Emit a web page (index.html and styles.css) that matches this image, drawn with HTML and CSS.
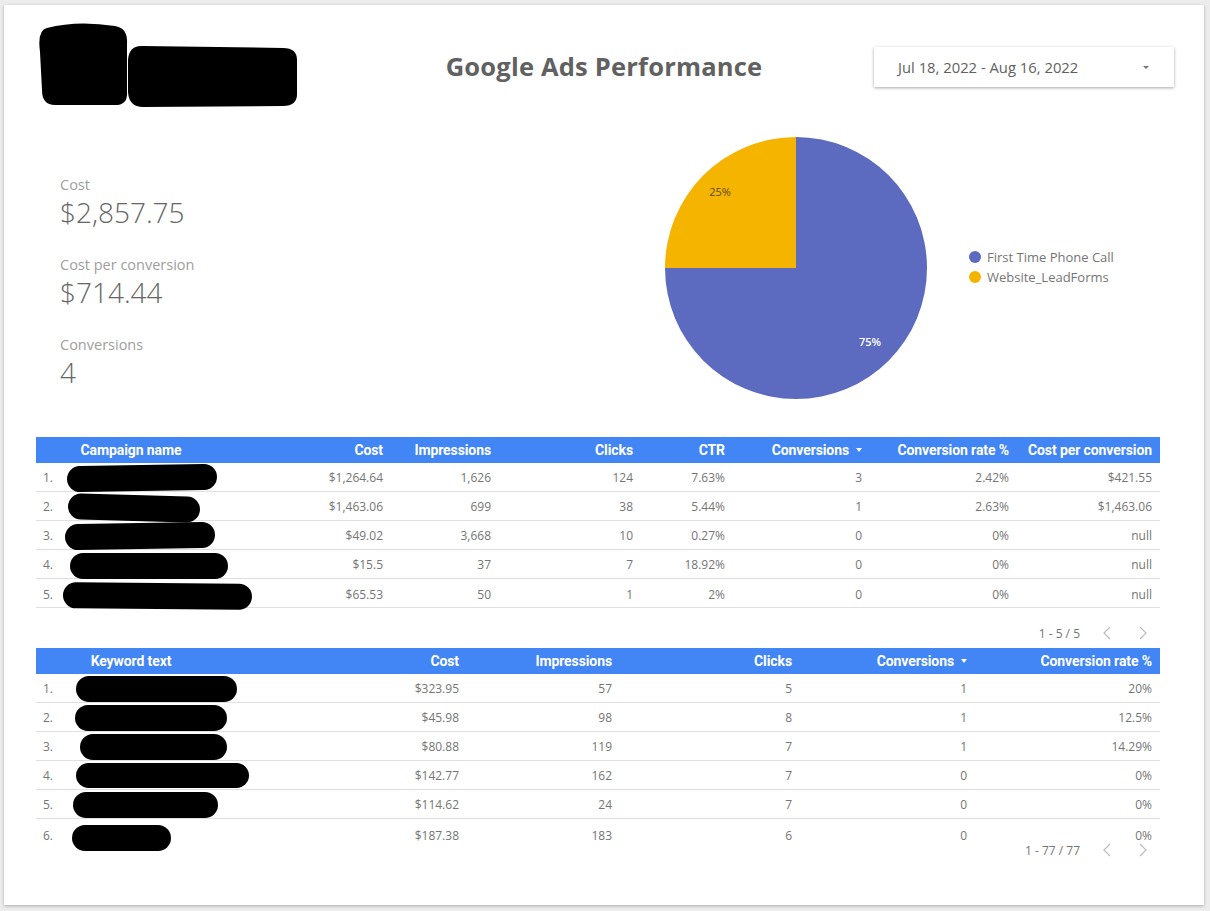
FILE: index.html
```html
<!DOCTYPE html>
<html>
<head>
<meta charset="utf-8">
<link rel="stylesheet" href="styles.css">
</head>
<body>
<div class="card">
  <header class="top">
    <div class="logo">
      <svg width="270" height="90" viewBox="0 0 270 90">
        <path d="M10 6 Q40 -2 78 4 Q91 6 90 22 L90 70 Q91 84 76 83 L18 83 Q5 83 5 68 L3 30 Q0 8 10 6 Z" fill="#000"/>
        <path d="M104 24 L246 26 Q261 26 260 40 L260 70 Q261 84 246 84 L106 85 Q92 85 91 70 L91 38 Q92 24 104 24 Z" fill="#000"/>
      </svg>
    </div>
    <h1 class="title">Google Ads Performance</h1>
    <div class="date-wrap">
      <div class="date">
        <span>Jul 18, 2022 - Aug 16, 2022</span>
        <span class="caret"></span>
      </div>
    </div>
  </header>

  <section class="overview">
    <div class="scores">
      <div class="score"><div class="s-label">Cost</div><div class="s-value">$2,857.75</div></div>
      <div class="score"><div class="s-label">Cost per conversion</div><div class="s-value">$714.44</div></div>
      <div class="score"><div class="s-label">Conversions</div><div class="s-value">4</div></div>
    </div>
    <div class="pie">
      <svg width="262" height="262" viewBox="0 0 262 262">
        <path d="M131 131 L131 0 A131 131 0 1 1 0 131 Z" fill="#5c6bc0"/>
        <path d="M131 131 L0 131 A131 131 0 0 1 131 0 Z" fill="#f4b400"/>
        <text x="55" y="59" class="pl-dark" text-anchor="middle">25%</text>
        <text x="205" y="209" class="pl-light" text-anchor="middle">75%</text>
      </svg>
    </div>
    <ul class="legend">
      <li><span class="dot blue"></span>First Time Phone Call</li>
      <li><span class="dot yellow"></span>Website_LeadForms</li>
    </ul>
  </section>

  <section class="table t1">
    <div class="row head">
      <div class="c idx"></div>
      <div class="c name">Campaign name</div>
      <div class="c">Cost</div>
      <div class="c">Impressions</div>
      <div class="c">Clicks</div>
      <div class="c">CTR</div>
      <div class="c">Conversions<span class="sort"></span></div>
      <div class="c">Conversion rate %</div>
      <div class="c">Cost per conversion</div>
    </div>
    <div class="row">
      <div class="c idx">1.</div><div class="c name"><span class="blob a1"></span></div>
      <div class="c">$1,264.64</div><div class="c">1,626</div><div class="c">124</div><div class="c">7.63%</div><div class="c">3</div><div class="c">2.42%</div><div class="c">$421.55</div>
    </div>
    <div class="row">
      <div class="c idx">2.</div><div class="c name"><span class="blob a2"></span></div>
      <div class="c">$1,463.06</div><div class="c">699</div><div class="c">38</div><div class="c">5.44%</div><div class="c">1</div><div class="c">2.63%</div><div class="c">$1,463.06</div>
    </div>
    <div class="row">
      <div class="c idx">3.</div><div class="c name"><span class="blob a3"></span></div>
      <div class="c">$49.02</div><div class="c">3,668</div><div class="c">10</div><div class="c">0.27%</div><div class="c">0</div><div class="c">0%</div><div class="c">null</div>
    </div>
    <div class="row">
      <div class="c idx">4.</div><div class="c name"><span class="blob a4"></span></div>
      <div class="c">$15.5</div><div class="c">37</div><div class="c">7</div><div class="c">18.92%</div><div class="c">0</div><div class="c">0%</div><div class="c">null</div>
    </div>
    <div class="row">
      <div class="c idx">5.</div><div class="c name"><span class="blob a5"></span></div>
      <div class="c">$65.53</div><div class="c">50</div><div class="c">1</div><div class="c">2%</div><div class="c">0</div><div class="c">0%</div><div class="c">null</div>
    </div>
    <div class="pager p1">
      <span>1 - 5 / 5</span>
      <svg class="chev" width="10" height="14" viewBox="0 0 10 14"><polyline points="8,1 2,7 8,13" fill="none" stroke="#bdbdbd" stroke-width="1.2"/></svg>
      <svg class="chev" width="10" height="14" viewBox="0 0 10 14"><polyline points="2,1 8,7 2,13" fill="none" stroke="#bdbdbd" stroke-width="1.2"/></svg>
    </div>
  </section>

  <section class="table t2">
    <div class="row head">
      <div class="c idx"></div>
      <div class="c name">Keyword text</div>
      <div class="c">Cost</div>
      <div class="c">Impressions</div>
      <div class="c">Clicks</div>
      <div class="c">Conversions<span class="sort"></span></div>
      <div class="c">Conversion rate %</div>
    </div>
    <div class="row">
      <div class="c idx">1.</div><div class="c name"><span class="blob b1"></span></div>
      <div class="c">$323.95</div><div class="c">57</div><div class="c">5</div><div class="c">1</div><div class="c">20%</div>
    </div>
    <div class="row">
      <div class="c idx">2.</div><div class="c name"><span class="blob b2"></span></div>
      <div class="c">$45.98</div><div class="c">98</div><div class="c">8</div><div class="c">1</div><div class="c">12.5%</div>
    </div>
    <div class="row">
      <div class="c idx">3.</div><div class="c name"><span class="blob b3"></span></div>
      <div class="c">$80.88</div><div class="c">119</div><div class="c">7</div><div class="c">1</div><div class="c">14.29%</div>
    </div>
    <div class="row">
      <div class="c idx">4.</div><div class="c name"><span class="blob b4"></span></div>
      <div class="c">$142.77</div><div class="c">162</div><div class="c">7</div><div class="c">0</div><div class="c">0%</div>
    </div>
    <div class="row">
      <div class="c idx">5.</div><div class="c name"><span class="blob b5"></span></div>
      <div class="c">$114.62</div><div class="c">24</div><div class="c">7</div><div class="c">0</div><div class="c">0%</div>
    </div>
    <div class="row last">
      <div class="c idx">6.</div><div class="c name"><span class="blob b6"></span></div>
      <div class="c">$187.38</div><div class="c">183</div><div class="c">6</div><div class="c">0</div><div class="c">0%</div>
    </div>
    <div class="pager p2">
      <span>1 - 77 / 77</span>
      <svg class="chev" width="10" height="14" viewBox="0 0 10 14"><polyline points="8,1 2,7 8,13" fill="none" stroke="#bdbdbd" stroke-width="1.2"/></svg>
      <svg class="chev" width="10" height="14" viewBox="0 0 10 14"><polyline points="2,1 8,7 2,13" fill="none" stroke="#bdbdbd" stroke-width="1.2"/></svg>
    </div>
  </section>
</div>
</body>
</html>
```

FILE: styles.css
```css
* { box-sizing: border-box; }
html, body { margin: 0; padding: 0; }
body {
  background: #ececec;
  font-family: "Open Sans", "Liberation Sans", sans-serif;
  color: #666;
  width: 1210px;
  height: 911px;
  overflow: hidden;
}
.card {
  margin: 5px 6px 6px 4px;
  width: 1200px;
  height: 900px;
  background: #fff;
  box-shadow: 0 1px 3px rgba(0,0,0,0.28);
  display: flex;
  flex-direction: column;
}

/* header */
.top {
  height: 120px;
  display: grid;
  grid-template-columns: 1fr auto 1fr;
}
.logo { padding: 17px 0 0 33px; }
.logo svg { display: block; }
.title {
  margin: 0;
  padding-top: 46px;
  line-height: 30px;
  font-size: 25.5px;
  font-weight: 700;
  color: #616161;
  letter-spacing: 0.2px;
}
.date-wrap {
  display: flex;
  justify-content: flex-end;
  padding: 42px 30px 0 0;
}
.date {
  width: 300px;
  height: 40px;
  display: flex;
  align-items: center;
  padding: 0 24px;
  font-size: 14.8px;
  color: #616161;
  box-shadow: 0 1px 3px rgba(0,0,0,0.35);
  background: #fff;
}
.caret {
  margin-left: auto;
  margin-right: 1px;
  width: 0; height: 0;
  border-left: 3px solid transparent;
  border-right: 3px solid transparent;
  border-top: 3px solid #757575;
}

/* overview */
.overview {
  height: 312px;
  display: grid;
  grid-template-columns: 661px 262px auto;
}
.scores { padding: 51px 0 0 56px; }
.score { height: 80px; }
.s-label {
  font-size: 14.5px;
  line-height: 18px;
  height: 18px;
  margin-bottom: 2px;
  color: #9e9e9e;
}
.s-value {
  font-size: 28px;
  line-height: 32px;
  height: 32px;
  font-weight: 300;
  color: #666;
}
.pie { padding-top: 12px; }
.pie svg { display: block; }
.pl-dark { font-size: 11px; fill: #5a4a1a; font-family: "Open Sans", sans-serif; }
.pl-light { font-size: 11px; fill: #fff; font-weight: 600; font-family: "Open Sans", sans-serif; }
.legend {
  list-style: none;
  margin: 0;
  padding: 122px 0 0 42px;
}
.legend li {
  height: 20px;
  display: flex;
  align-items: center;
  font-size: 13px;
  color: #757575;
}
.dot {
  width: 12px; height: 12px;
  border-radius: 50%;
  margin-right: 6px;
}
.dot.blue { background: #5c6bc0; }
.dot.yellow { background: #f4b400; }

/* tables */
.table {
  margin-left: 32px;
  width: 1124px;
  display: flex;
  flex-direction: column;
}
.t1 .row { grid-template-columns: 36px 118px 201px 108px 142px 92px 137px 147px 143px; }
.t2 .row { grid-template-columns: 36px 118px 277px 153px 180px 175px 185px; }
.row {
  display: grid;
  height: 29px;
  border-bottom: 1px solid #e0e0e0;
  font-size: 12px;
  color: #757575;
}
.row.last { border-bottom: none; height: 28px; }
.row.head {
  height: 26px;
  background: #4285f4;
  border-bottom: none;
  color: #fff;
  font-family: Roboto, "Liberation Sans", sans-serif;
  font-weight: 700;
  font-size: 14px;
  letter-spacing: -0.1px;
}
.c {
  display: flex;
  align-items: center;
  justify-content: flex-end;
  padding: 0 8px;
  white-space: nowrap;
}
.c.idx { justify-content: flex-start; padding: 0 0 0 7px; }
.c.name { justify-content: flex-start; padding: 0; overflow: visible; }
.head .c.name { justify-content: center; }
.sort {
  width: 0; height: 0;
  margin-left: 7px;
  border-left: 3px solid transparent;
  border-right: 3px solid transparent;
  border-top: 4px solid #fff;
}
.blob {
  display: block;
  flex: none;
  background: #000;
  border-radius: 14px;
  height: 26px;
}
.a1 { width: 150px; margin: 2px 0 0 -5px; transform: rotate(-1deg); }
.a2 { width: 132px; margin: 3px 0 0 -4px; transform: rotate(1.5deg); }
.a3 { width: 150px; margin: 2px 0 0 -7px; transform: rotate(-1deg); }
.a4 { width: 158px; margin: 3px 0 0 -2px; }
.a5 { width: 189px; margin: 4px 0 0 -9px; transform: rotate(0.5deg); }
.b1 { width: 161px; margin: 2px 0 0 4px; }
.b2 { width: 152px; margin: 2px 0 0 3px; }
.b3 { width: 147px; margin: 1px 0 0 8px; }
.b4 { width: 173px; margin: 1px 0 0 4px; height: 25px; }
.b5 { width: 145px; margin: 2px 0 0 1px; }
.b6 { width: 99px; margin: 6px 0 0 0; }

.pager {
  display: flex;
  justify-content: flex-end;
  align-items: center;
  font-size: 12px;
  color: #757575;
  padding-right: 12px;
}
.pager .chev { margin-left: 22px; display: block; }
.pager .chev:last-child { margin-left: 26px; }
.p1 { height: 40px; padding-top: 10px; }
.p2 { height: 20px; margin-top: -7px; }
```
